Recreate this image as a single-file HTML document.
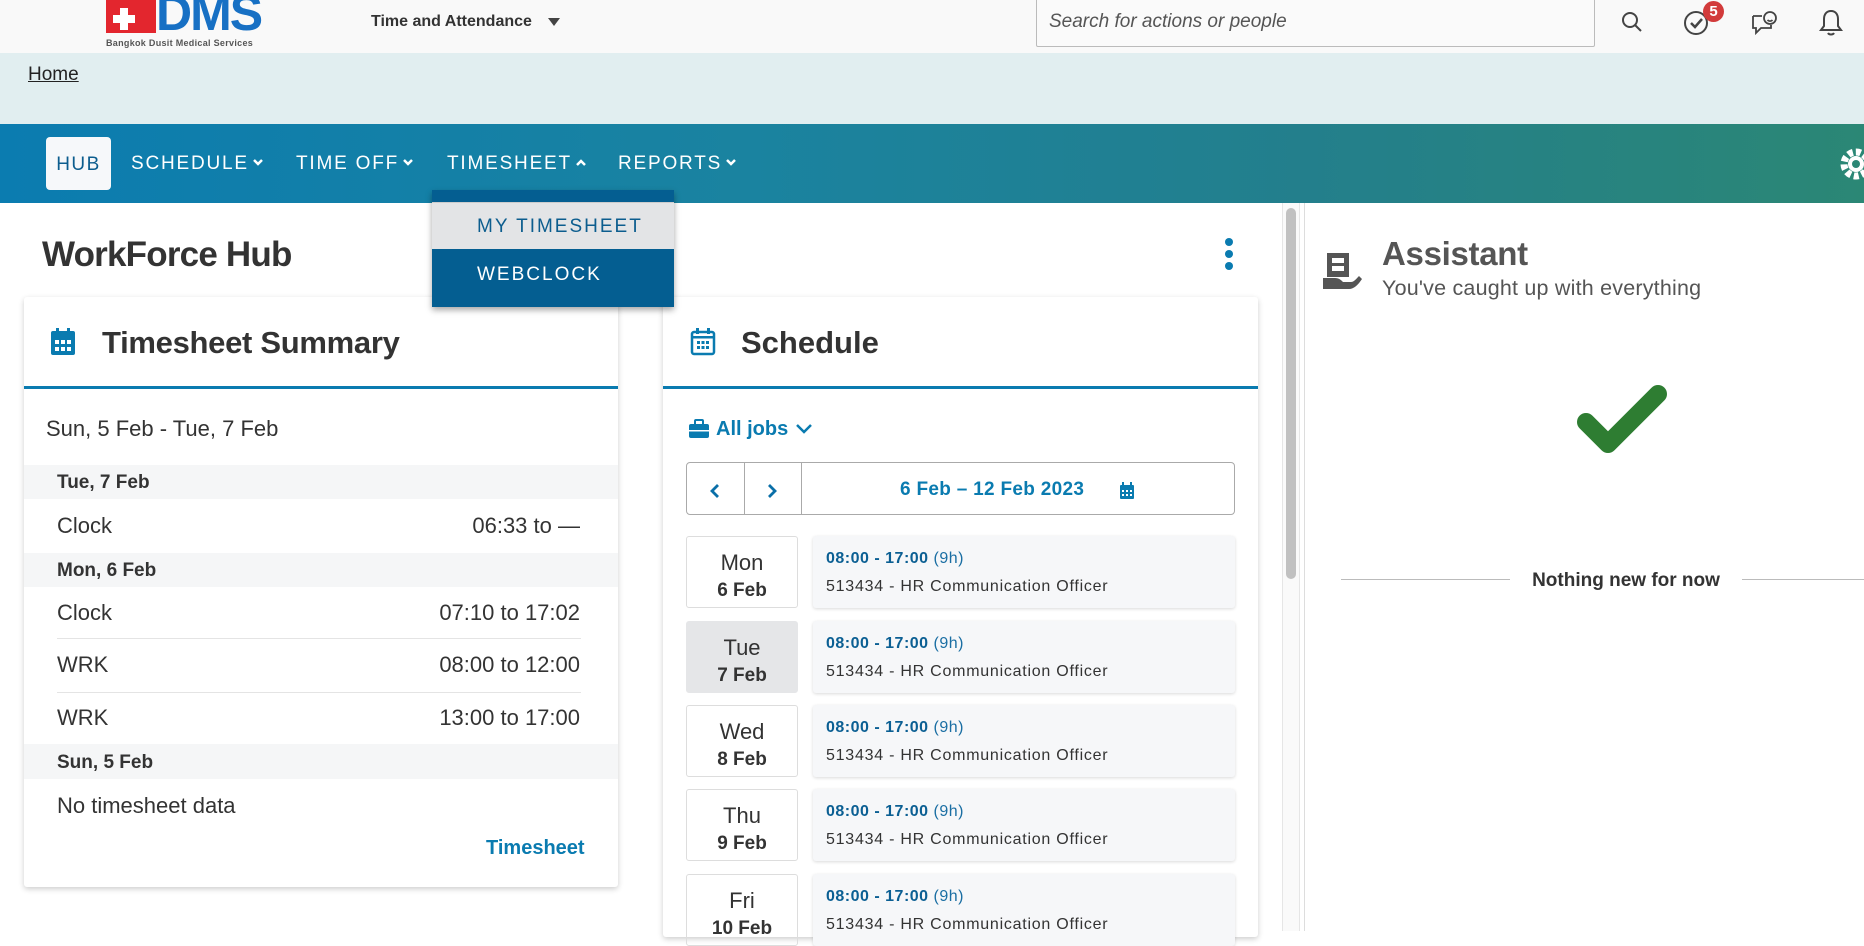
<!DOCTYPE html>
<html><head><meta charset="utf-8">
<style>
*{box-sizing:border-box;margin:0;padding:0}
body{width:1864px;height:931px;overflow:hidden;background:#fff;font-family:"Liberation Sans",Arial,sans-serif;color:#333;position:relative}
.a{position:absolute}
.nav{color:#fff;font-size:19px;letter-spacing:1.8px;top:153px}
.nav svg{margin-left:3px;vertical-align:2px}
.row{position:absolute;left:24px;width:594px}
.gray{background:#f5f6f7;font-weight:bold;font-size:19px;padding-left:33px;color:#333}
.item{font-size:22px;color:#333}
.item span{position:absolute;left:33px}
.item b{position:absolute;right:38px;font-weight:normal}
.day{position:absolute;left:686px;width:112px;height:72px;border:1px solid #ddd;border-radius:3px;text-align:center;font-size:22px;color:#333;padding-top:12px;line-height:28px}
.day b{font-size:19px;display:block}
.shift{position:absolute;left:813px;width:422px;height:72px;background:#f6f7f9;border-radius:3px;box-shadow:0 1px 3px rgba(0,0,0,.15);padding:14px 0 0 13px}
.shift .t{color:#0b5f93;font-weight:bold;font-size:16px;letter-spacing:.5px}
.shift .t span{font-weight:normal;color:#1a6ea3}
.shift .j{font-size:16px;color:#333;margin-top:10px;letter-spacing:.75px}
</style></head><body>
<!-- header -->
<div class="a" style="left:0;top:0;width:1864px;height:53px;background:#f9f9f9"></div>
<div class="a" style="left:106px;top:0;width:50px;height:33px;background:#e3262e"></div>
<div class="a" style="left:120px;top:8px;width:8px;height:22px;background:#fff"></div>
<div class="a" style="left:113px;top:15px;width:22px;height:8px;background:#fff"></div>
<div class="a" style="left:156px;top:-16px;font:bold 50px 'Liberation Sans',sans-serif;color:#1770c4;letter-spacing:-2px">DMS</div>
<div class="a" style="left:106px;top:38px;font-size:9px;font-weight:bold;color:#555;letter-spacing:.3px">Bangkok Dusit Medical Services</div>
<div class="a" style="left:371px;top:13px;font-size:16px;font-weight:bold;color:#333">Time and Attendance</div>
<svg class="a" style="left:547px;top:17px" width="14" height="10" viewBox="0 0 14 10"><path d="M1 1h12L7 9z" fill="#444"/></svg>
<div class="a" style="left:1036px;top:-2px;width:559px;height:49px;border:1px solid #bbb;border-radius:2px;background:#fafafa;padding:12px 0 0 12px;font:italic 19px 'Liberation Sans',sans-serif;color:#555">Search for actions or people</div>
<svg class="a" style="left:1618px;top:8px" width="30" height="30" viewBox="0 0 30 30" fill="none" stroke="#444" stroke-width="2"><circle cx="12" cy="12" r="7"/><path d="M17 17l6 6"/></svg>
<svg class="a" style="left:1682px;top:8px" width="30" height="30" viewBox="0 0 30 30" fill="none" stroke="#444" stroke-width="2"><circle cx="14" cy="15" r="11"/><path d="M9 15l4 4 7-8" stroke-width="2.5"/></svg>
<div class="a" style="left:1703px;top:1px;width:21px;height:21px;border-radius:50%;background:#d23b3b;color:#fff;font-weight:bold;font-size:15px;text-align:center;line-height:21px">5</div>
<svg class="a" style="left:1749px;top:8px" width="30" height="30" viewBox="0 0 30 30" fill="none" stroke="#444" stroke-width="1.8"><path d="M4 8h9M4 8v12h3v5l5-5h10v-3"/><circle cx="21" cy="10" r="6"/><path d="M18.5 12c1.5 1.5 3.5 1.5 5 0"/></svg>
<svg class="a" style="left:1816px;top:7px" width="30" height="32" viewBox="0 0 30 32" fill="none" stroke="#444" stroke-width="2"><path d="M15 4c-5 0-7 4-7 8v7l-3 4h20l-3-4v-7c0-4-2-8-7-8z"/><path d="M12 26c1 2 5 2 6 0"/></svg>
<!-- breadcrumb -->
<div class="a" style="left:0;top:53px;width:1864px;height:71px;background:#e1eef0"></div>
<div class="a" style="left:28px;top:64px;font-size:19px;color:#222;text-decoration:underline">Home</div>
<!-- nav -->
<div class="a" style="left:0;top:124px;width:1864px;height:79px;background:linear-gradient(90deg,#0b7cb0 0%,#1a83a0 40%,#237f8c 70%,#2b8775 100%)"></div>
<div class="a" style="left:46px;top:137px;width:65px;height:53px;background:#f6f8fa;border-radius:4px;color:#0c5d8e;font-size:19px;letter-spacing:1.5px;text-align:center;line-height:55px">HUB</div>
<div class="a nav" style="left:131px">SCHEDULE<svg width="12" height="9" viewBox="0 0 12 9"><path d="M2 2l4 4 4-4" fill="none" stroke="#fff" stroke-width="2.5"/></svg></div>
<div class="a nav" style="left:296px">TIME OFF<svg width="12" height="9" viewBox="0 0 12 9"><path d="M2 2l4 4 4-4" fill="none" stroke="#fff" stroke-width="2.5"/></svg></div>
<div class="a nav" style="left:447px">TIMESHEET<svg width="12" height="9" viewBox="0 0 12 9"><path d="M2 7l4-4 4 4" fill="none" stroke="#fff" stroke-width="2.5"/></svg></div>
<div class="a nav" style="left:618px">REPORTS<svg width="12" height="9" viewBox="0 0 12 9"><path d="M2 2l4 4 4-4" fill="none" stroke="#fff" stroke-width="2.5"/></svg></div>
<svg class="a" style="left:1838px;top:146px" width="30" height="36" viewBox="0 0 30 36"><circle cx="18" cy="18" r="12" fill="none" stroke="#fff" stroke-width="7" stroke-dasharray="5 3"/><circle cx="18" cy="18" r="8" fill="#fff"/><circle cx="18" cy="18" r="4" fill="#2b8775"/></svg>
<!-- WorkForce Hub -->
<div class="a" style="left:42px;top:235px;font-size:35px;font-weight:bold;color:#333;letter-spacing:-.8px">WorkForce Hub</div>
<div class="a" style="left:1225px;top:238px;width:8px;height:8px;border-radius:50%;background:#0a7bb0;box-shadow:0 12px 0 #0a7bb0,0 24px 0 #0a7bb0"></div>
<!-- timesheet card -->
<div class="a" style="left:24px;top:297px;width:594px;height:590px;background:#fff;box-shadow:0 2px 6px rgba(0,0,0,.2);border-radius:3px"></div>
<svg class="a" style="left:50px;top:327px" width="26" height="30" viewBox="0 0 26 30"><rect x="1" y="4" width="24" height="24" rx="2" fill="#0a7bb0"/><rect x="6" y="1" width="3" height="6" fill="#0a7bb0"/><rect x="17" y="1" width="3" height="6" fill="#0a7bb0"/><g fill="#fff"><rect x="5" y="13" width="4" height="4"/><rect x="11" y="13" width="4" height="4"/><rect x="17" y="13" width="4" height="4"/><rect x="5" y="20" width="4" height="4"/><rect x="11" y="20" width="4" height="4"/><rect x="17" y="20" width="4" height="4"/></g></svg>
<div class="a" style="left:102px;top:325px;font-size:31px;font-weight:bold;color:#333;letter-spacing:-.3px">Timesheet Summary</div>
<div class="a" style="left:24px;top:386px;width:594px;height:3px;background:#0a7bb0"></div>
<div class="a" style="left:46px;top:416px;font-size:22px;color:#333">Sun, 5 Feb - Tue, 7 Feb</div>
<div class="row gray" style="top:465px;height:34px;line-height:36px">Tue, 7 Feb</div>
<div class="row item" style="top:499px;height:54px;line-height:54px"><span>Clock</span><b>06:33 to —</b></div>
<div class="row gray" style="top:553px;height:34px;line-height:36px">Mon, 6 Feb</div>
<div class="row item" style="top:587px;height:51px;line-height:51px"><span>Clock</span><b>07:10 to 17:02</b></div>
<div class="a" style="left:57px;top:638px;width:524px;height:1px;background:#e4e4e4"></div>
<div class="row item" style="top:638px;height:54px;line-height:54px"><span>WRK</span><b>08:00 to 12:00</b></div>
<div class="a" style="left:57px;top:692px;width:524px;height:1px;background:#e4e4e4"></div>
<div class="row item" style="top:692px;height:52px;line-height:52px"><span>WRK</span><b>13:00 to 17:00</b></div>
<div class="row gray" style="top:744px;height:35px;line-height:37px">Sun, 5 Feb</div>
<div class="row item" style="top:779px;height:53px;line-height:53px"><span>No timesheet data</span></div>
<div class="a" style="left:486px;top:837px;font-size:20px;font-weight:bold;color:#0a7bb0">Timesheet</div>
<!-- schedule card -->
<div class="a" style="left:663px;top:297px;width:595px;height:640px;background:#fff;box-shadow:0 2px 6px rgba(0,0,0,.2);border-radius:3px"></div>
<svg class="a" style="left:690px;top:327px" width="26" height="30" viewBox="0 0 26 30"><rect x="2" y="5" width="22" height="22" rx="2" fill="none" stroke="#0a7bb0" stroke-width="2.5"/><rect x="6" y="1" width="3" height="6" fill="#0a7bb0"/><rect x="17" y="1" width="3" height="6" fill="#0a7bb0"/><rect x="2" y="9" width="22" height="2.5" fill="#0a7bb0"/><g fill="#0a7bb0"><rect x="7" y="14" width="3" height="3"/><rect x="11.5" y="14" width="3" height="3"/><rect x="16" y="14" width="3" height="3"/><rect x="7" y="19" width="3" height="3"/><rect x="11.5" y="19" width="3" height="3"/><rect x="16" y="19" width="3" height="3"/></g></svg>
<div class="a" style="left:741px;top:325px;font-size:31px;font-weight:bold;color:#333">Schedule</div>
<div class="a" style="left:663px;top:386px;width:595px;height:3px;background:#0a7bb0"></div>
<svg class="a" style="left:688px;top:418px" width="22" height="22" viewBox="0 0 22 22"><rect x="7" y="2" width="8" height="5" rx="1" fill="none" stroke="#0a7bb0" stroke-width="2"/><rect x="1" y="6" width="20" height="14" rx="2" fill="#0a7bb0"/><rect x="1" y="12" width="20" height="1.5" fill="#fff"/></svg>
<div class="a" style="left:716px;top:418px;font-size:20px;font-weight:bold;color:#0a7bb0">All jobs</div>
<svg class="a" style="left:795px;top:422px" width="18" height="14" viewBox="0 0 18 14"><path d="M2 3l7 7 7-7" fill="none" stroke="#0a7bb0" stroke-width="2.5"/></svg>
<div class="a" style="left:686px;top:462px;width:549px;height:53px;border:1px solid #aaa;border-radius:4px"></div>
<div class="a" style="left:744px;top:463px;width:1px;height:51px;background:#aaa"></div>
<div class="a" style="left:801px;top:463px;width:1px;height:51px;background:#aaa"></div>
<svg class="a" style="left:707px;top:482px" width="16" height="18" viewBox="0 0 16 18"><path d="M11 3L5 9l6 6" fill="none" stroke="#0a6fa8" stroke-width="2.8"/></svg>
<svg class="a" style="left:764px;top:482px" width="16" height="18" viewBox="0 0 16 18"><path d="M5 3l6 6-6 6" fill="none" stroke="#0a6fa8" stroke-width="2.8"/></svg>
<div class="a" style="left:900px;top:479px;font-size:19px;font-weight:bold;color:#0a7bb0;letter-spacing:.3px">6 Feb – 12 Feb 2023</div>
<svg class="a" style="left:1119px;top:482px" width="16" height="18" viewBox="0 0 16 18"><rect x="1" y="3" width="14" height="14" rx="1" fill="#0a7bb0"/><rect x="3" y="0" width="2" height="4" fill="#0a7bb0"/><rect x="11" y="0" width="2" height="4" fill="#0a7bb0"/><g fill="#fff"><rect x="3" y="8" width="2" height="2"/><rect x="7" y="8" width="2" height="2"/><rect x="11" y="8" width="2" height="2"/><rect x="3" y="12" width="2" height="2"/><rect x="7" y="12" width="2" height="2"/><rect x="11" y="12" width="2" height="2"/></g></svg>
<div class="day" style="top:536px">Mon<b>6 Feb</b></div>
<div class="shift" style="top:536px"><div class="t">08:00 - 17:00 <span>(9h)</span></div><div class="j">513434 - HR Communication Officer</div></div>
<div class="day" style="top:621px;background:#e5e6e8;border-color:#e5e6e8">Tue<b>7 Feb</b></div>
<div class="shift" style="top:621px"><div class="t">08:00 - 17:00 <span>(9h)</span></div><div class="j">513434 - HR Communication Officer</div></div>
<div class="day" style="top:705px">Wed<b>8 Feb</b></div>
<div class="shift" style="top:705px"><div class="t">08:00 - 17:00 <span>(9h)</span></div><div class="j">513434 - HR Communication Officer</div></div>
<div class="day" style="top:789px">Thu<b>9 Feb</b></div>
<div class="shift" style="top:789px"><div class="t">08:00 - 17:00 <span>(9h)</span></div><div class="j">513434 - HR Communication Officer</div></div>
<div class="day" style="top:874px">Fri<b>10 Feb</b></div>
<div class="shift" style="top:874px"><div class="t">08:00 - 17:00 <span>(9h)</span></div><div class="j">513434 - HR Communication Officer</div></div>
<!-- dropdown -->
<div class="a" style="left:432px;top:190px;width:242px;height:117px;background:#045e91;box-shadow:0 3px 6px rgba(0,0,0,.35)"></div>
<div class="a" style="left:432px;top:202px;width:242px;height:47px;background:#e3e4e6;border-top:1px solid #ccc"></div>
<div class="a" style="left:477px;top:216px;font-size:19px;letter-spacing:2px;color:#0c5d8e">MY TIMESHEET</div>
<div class="a" style="left:477px;top:264px;font-size:19px;letter-spacing:2px;color:#fff">WEBCLOCK</div>
<!-- scrollbar & divider -->
<div class="a" style="left:1282px;top:203px;width:18px;height:728px;background:#fafafa;border-left:1px solid #e6e6e6;border-right:1px solid #e6e6e6"></div>
<div class="a" style="left:1286px;top:208px;width:10px;height:371px;background:#c1c1c1;border-radius:5px"></div>
<div class="a" style="left:1304px;top:203px;width:1px;height:728px;background:#ddd"></div>
<!-- assistant -->
<svg class="a" style="left:1322px;top:250px" width="42" height="46" viewBox="0 0 42 46"><path d="M5 3h22v24H5z" fill="#555"/><rect x="10" y="8" width="12" height="5" fill="#fff"/><rect x="10" y="16" width="12" height="5" fill="#fff"/><path d="M1 28h12c4 0 6 2 8 4h8c3 0 5-3 8-6l3 3c-4 6-8 10-13 10H1z" fill="#555"/></svg>
<div class="a" style="left:1382px;top:235px;font-size:33px;font-weight:bold;color:#555;letter-spacing:-.3px">Assistant</div>
<div class="a" style="left:1382px;top:276px;font-size:21.5px;color:#555;letter-spacing:.2px">You've caught up with everything</div>
<svg class="a" style="left:1574px;top:384px" width="104" height="80" viewBox="0 0 104 80"><path d="M12 38l22 22 50-50" fill="none" stroke="#2e7d32" stroke-width="18" stroke-linecap="round" stroke-linejoin="round"/></svg>
<div class="a" style="left:1341px;top:579px;width:169px;height:1px;background:#bbb"></div>
<div class="a" style="left:1742px;top:579px;width:122px;height:1px;background:#bbb"></div>
<div class="a" style="left:1510px;top:570px;width:232px;text-align:center;font-size:19px;font-weight:bold;color:#333">Nothing new for now</div>
</body></html>
